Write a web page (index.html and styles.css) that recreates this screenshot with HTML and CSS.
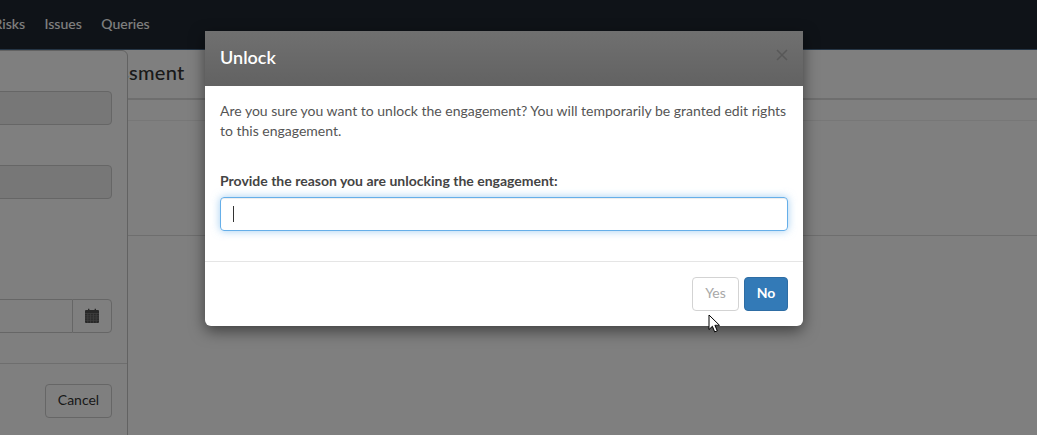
FILE: index.html
```html
<!DOCTYPE html>
<html lang="en">
<head>
<meta charset="utf-8">
<title>Unlock</title>
<link rel="stylesheet" href="styles.css">
</head>
<body>
<header class="topbar">
  <nav class="topnav"><a class="navlink">Risks</a><a class="navlink">Issues</a><a class="navlink">Queries</a></nav>
</header>
<main class="page">
  <h1 class="page-title">Risk Assessment</h1>
  <div class="rule rule-a"></div>
  <div class="rule rule-b"></div>
  <div class="rule rule-c"></div>
</main>
<aside class="panel">
  <div class="panel-body">
    <div class="field field-a"></div>
    <div class="field field-b"></div>
    <div class="date-group">
      <div class="date-input"></div>
      <div class="date-btn">
        <svg class="cal" width="14" height="15" viewBox="0 0 14 15"><path fill="#505050" d="M1 2h2V.8h1.4V2h5.2V.8H11V2h2a1 1 0 0 1 1 1v11a1 1 0 0 1-1 1H1a1 1 0 0 1-1-1V3a1 1 0 0 1 1-1z"/><path stroke="#7f7f7f" stroke-width=".8" fill="none" d="M0 5.5h14M0 7.8h14M0 10h14M0 12.3h14M2.8 5.5V15M5.6 5.5V15M8.4 5.5V15M11.2 5.5V15"/></svg>
      </div>
    </div>
  </div>
  <div class="panel-foot"><span class="cancel">Cancel</span></div>
</aside>
<div class="backdrop"></div>
<section class="modal">
  <div class="modal-head">
    <h2 class="modal-title">Unlock</h2>
    <svg class="close" width="12" height="12" viewBox="0 0 12 12" role="img" aria-label="Close"><path stroke="#585858" stroke-width="1.5" fill="none" d="M1 1l10 10M11 1L1 11"/></svg>
  </div>
  <div class="modal-body">
    <p class="msg">Are you sure you want to unlock the engagement? You will temporarily be granted edit rights to this engagement.</p>
    <label class="lbl">Provide the reason you are unlocking the engagement:</label>
    <div class="reason"><span class="caret"></span></div>
  </div>
  <div class="modal-foot">
    <span class="btn btn-yes">Yes</span>
    <span class="btn btn-no">No</span>
  </div>
</section>
<svg class="pointer" width="14" height="20" viewBox="0 0 14 20"><path fill="#fff" stroke="#000" stroke-width="1" d="M1 1v14.5l3.4-3.2 2.3 5.6 2.6-1.1-2.4-5.5h4.6z"/></svg>
</body>
</html>
```
FILE: styles.css
```css
* { box-sizing: border-box; }
html, body { margin: 0; height: 100%; }
body {
  position: relative;
  width: 1037px;
  height: 435px;
  overflow: hidden;
  background: #fff;
  font-family: Lato, "Liberation Sans", sans-serif;
  font-size: 14px;
  color: #333;
}
.topbar {
  height: 50px;
  background: #1f2730;
  border-bottom: 1px solid #4a6a8a;
}
.topnav {
  display: flex;
  gap: 19.5px;
  margin-left: -6.5px;
  height: 47px;
  align-items: center;
}
.navlink { color: #fff; font-size: 14px; font-weight: 500; }
.page { height: 385px; }
.page-title {
  margin: 0;
  padding: 9px 0 0 0;
  position: absolute;
  left: 35px;
  top: 50px;
  font-size: 20px;
  font-weight: 500;
  line-height: 26px;
  letter-spacing: .3px;
  color: #333;
}
.rule { position: absolute; left: 0; right: 0; height: 1px; background: #ddd; }
.rule-a { top: 98px; height: 2px; }
.rule-b { top: 120px; background: #eee; }
.rule-c { top: 235px; }
.panel {
  position: absolute;
  left: -272px;
  top: 50px;
  width: 400px;
  height: 400px;
  background: #fff;
  border: 1px solid #c4c4c4;
  border-radius: 6px;
  display: flex;
  flex-direction: column;
}
.panel-body {
  height: 313px;
  padding: 40px 15px 0 0;
  display: flex;
  flex-direction: column;
  align-items: stretch;
  border-bottom: 1px solid #ddd;
}
.field {
  height: 34px;
  background: #eee;
  border: 1px solid #ccc;
  border-radius: 4px;
}
.field-b { margin-top: 40px; }
.date-group { display: flex; height: 34px; margin-top: 100px; }
.date-input { flex: 1; border: 1px solid #ccc; border-right: 0; }
.date-btn {
  width: 40px;
  display: flex;
  align-items: center;
  justify-content: center;
  padding-bottom: 2px;
  border: 1px solid #ccc;
  border-radius: 0 4px 4px 0;
}
.panel-foot { display: flex; justify-content: flex-end; padding: 20px 15px 0 0; }
.cancel {
  width: 67px;
  height: 34px;
  display: flex;
  align-items: center;
  justify-content: center;
  padding-bottom: 3px;
  border: 1px solid #ccc;
  border-radius: 4px;
  color: #333;
}
.backdrop { position: absolute; inset: 0; background: rgba(0, 0, 0, .5); }
.modal {
  position: absolute;
  left: 205px;
  top: 31px;
  width: 598px;
  height: 295px;
  background: #fff;
  border-radius: 0 0 6px 6px;
  box-shadow: 0 5px 15px rgba(0, 0, 0, .5);
  display: flex;
  flex-direction: column;
}
.modal-head {
  height: 55px;
  padding: 0 15px 4px;
  display: flex;
  align-items: center;
  justify-content: space-between;
  background: linear-gradient(#707070, #626262);
}
.modal-title { margin: 0; font-size: 18px; font-weight: 600; color: #fff; line-height: 26px; }
.close { margin: -4px 0 0; }
.modal-body { height: 175px; padding: 15px 15px 0; }
.msg { margin: 0; line-height: 20px; color: #555; font-size: 14px; }
.lbl { display: block; margin-top: 30px; font-weight: 700; color: #444; line-height: 20px; }
.reason {
  margin-top: 6px;
  height: 34px;
  border: 1px solid #66afe9;
  border-radius: 4px;
  box-shadow: inset 0 1px 1px rgba(0, 0, 0, .075), 0 0 8px rgba(102, 175, 233, .6);
  padding: 8px 12px;
  display: flex;
  align-items: center;
}
.caret { width: 1px; height: 16px; background: #333; }
.modal-foot {
  flex: 1;
  border-top: 1px solid #e5e5e5;
  padding: 15px;
  display: flex;
  justify-content: flex-end;
  align-items: flex-start;
  gap: 5px;
}
.btn {
  height: 34px;
  display: flex;
  align-items: center;
  justify-content: center;
  padding-bottom: 3px;
  border-radius: 4px;
  font-size: 14px;
}
.btn-yes { width: 47px; border: 1px solid #ccc; color: #999; opacity: .85; }
.btn-no { width: 44px; background: #337ab7; border: 1px solid #2e6da4; color: #fff; font-weight: 700; }
.pointer { position: absolute; left: 708px; top: 314px; }
```
